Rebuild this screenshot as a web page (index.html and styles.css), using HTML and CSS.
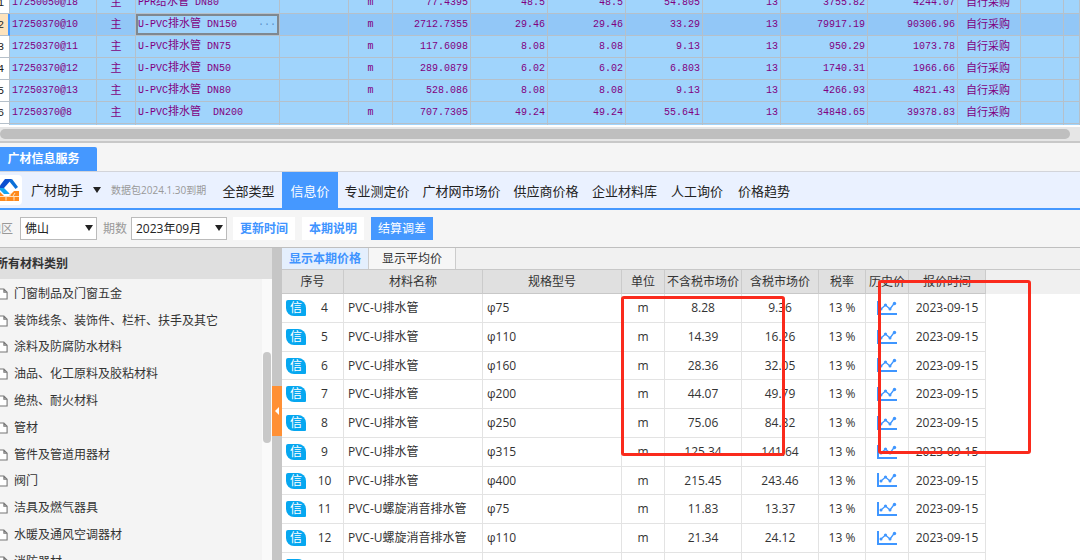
FILE: index.html
```
<!DOCTYPE html>
<html lang="zh-CN">
<head>
<meta charset="utf-8">
<title>广材助手</title>
<link rel="stylesheet" href="styles.css">
</head>
<body>
<svg class="defs" aria-hidden="true">
  <symbol id="doc" viewBox="0 0 12 14"><path d="M1 1.500h6.500l3.500 3.500v7.500h-10zM7.500 1.500v3.500h3.500" fill="#fff" stroke="#777" stroke-width="1.200"/></symbol>
  <symbol id="trend" viewBox="0 0 20 15"><path d="M1 0v13h19" fill="none" stroke="#3f96ff" stroke-width="2"/><path d="M4 8l4.500-4 4.500 4 4.500-6" fill="none" stroke="#3f96ff" stroke-width="1.300"/><g fill="#3f96ff"><circle cx="4" cy="8" r="1.500"/><circle cx="8.500" cy="4" r="1.600"/><circle cx="13" cy="8" r="1.500"/><circle cx="17.500" cy="2.500" r="1.700"/></g></symbol>
</svg>

<section class="sheet">
  <table class="sheet-table">
    <colgroup><col class="s-no"><col class="s-code"><col class="s-type"><col class="s-name"><col class="s-spec"><col class="s-unit"><col class="s-wide"><col class="s-num"><col class="s-wide"><col class="s-num"><col class="s-wide"><col class="s-sum"><col class="s-total"><col class="s-mode"><col class="s-gap"><col></colgroup>
    <tbody id="sheet-rows"></tbody>
  </table>
</section>
<div class="hscroll"><div class="hscroll-thumb"></div></div>

<div class="dock-tabs"><button class="dock-tab">广材信息服务</button></div>

<header class="nav">
  <svg class="logo" viewBox="0 0 30 30"><rect width="30" height="30" rx="4" fill="#fff"/><path d="M13 4h7l-8 9H6z" fill="#0a4fd0"/><path d="M6 13h6l6 6h-6z" fill="#12a5f0"/><path d="M17 6l3-2 6 8-2.500 2-4.500-5.500z" fill="#0a6fd8"/><path d="M8 17l4 4h5l3-3 2-2h5v10H8z" fill="#ff8a1c"/><path d="M8 21.500h19M14 21.500v4M18 18v3.500l-2 0M22 21.500v4M23 18l-2 3" fill="none" stroke="#ffe2c0" stroke-width="1"/></svg>
  <button class="brand">广材助手<span class="caret"></span></button>
  <span class="expiry">数据包2024.1.30到期</span>
  <nav class="menu">
    <a href="#">全部类型</a><a href="#" class="current">信息价</a><a href="#">专业测定价</a><a href="#">广材网市场价</a><a href="#">供应商价格</a><a href="#">企业材料库</a><a href="#">人工询价</a><a href="#">价格趋势</a>
  </nav>
</header>

<div class="filters">
  <label for="area">地区</label>
  <span class="picker area"><select id="area"><option>佛山</option></select></span>
  <label for="period">期数</label>
  <span class="picker period"><select id="period"><option>2023年09月</option></select></span>
  <button class="action">更新时间</button>
  <button class="action">本期说明</button>
  <button class="action primary">结算调差</button>
</div>

<main class="work">
  <aside class="side">
    <h2>所有材料类别</h2>
    <div class="side-body">
      <ul class="tree" id="tree"></ul>
      <div class="vscroll"><div class="vscroll-thumb"></div></div>
    </div>
  </aside>
  <div class="splitter"><button class="collapse" aria-label="收起"></button></div>
  <section class="prices">
    <div class="views"><button class="view active">显示本期价格</button><button class="view">显示平均价</button></div>
    <div class="table-area">
      <table class="price-table">
        <colgroup><col class="p-no"><col class="p-name"><col class="p-name"><col class="p-unit"><col class="p-price"><col class="p-price"><col class="p-rate"><col class="p-unit"><col class="p-price"></colgroup>
        <thead><tr><th>序号</th><th>材料名称</th><th>规格型号</th><th>单位</th><th>不含税市场价</th><th>含税市场价</th><th>税率</th><th>历史价</th><th>报价时间</th></tr></thead>
        <tbody id="price-rows"></tbody>
      </table>
    </div>
    <div class="mark mark-price"></div>
    <div class="mark mark-date"></div>
  </section>
</main>
<script src="app.js"></script>
</body>
</html>
```

FILE: styles.css
```
* { box-sizing: border-box; }

body {
  margin: 0;
  height: 100vh;
  display: flex;
  flex-direction: column;
  overflow: hidden;
  background: #f5f5f5;
  color: #333;
  font: 12px/16px "Open Sans", "Noto Sans CJK SC", sans-serif;
}

button, select { font: inherit; color: inherit; border: 0; padding: 0; margin: 0; background: none; border-radius: 0; }
a { color: inherit; text-decoration: none; }
table { border-collapse: separate; border-spacing: 0; table-layout: fixed; }
.defs { position: absolute; width: 0; height: 0; }

/* Bill of materials */
.sheet { flex: none; height: 125px; overflow: hidden; background: #fff; }
.sheet-table {
  width: calc(100% + 10px);
  margin: -8px 0 0 -10px;
  color: #800080;
  font: 10px/20px "Liberation Mono", "Noto Sans CJK SC", monospace;
}
.s-no { width: 20px; }
.s-code { width: 87px; }
.s-type { width: 39px; }
.s-name { width: 144px; }
.s-spec { width: 69px; }
.s-unit { width: 44px; }
.s-wide { width: 78px; }
.s-num { width: 77px; }
.s-sum { width: 87px; }
.s-total { width: 90px; }
.s-mode { width: 63px; }
.s-gap { width: 43px; }
.sheet-table td {
  height: 22px;
  padding: 0 2px;
  background: #a0d4fc;
  border-right: 1px solid #b5c0ca;
  border-bottom: 1px solid #b5c0ca;
  white-space: nowrap;
  text-align: right;
}
.sheet-table .l { text-align: left; }
.sheet-table .c { text-align: center; }
.sheet-table .mode { text-align: left; padding-left: 8px; }
.sheet-table .no { background: #fff; color: #222; padding-right: 5px; font-size: 11px; }
.sheet-table .zh { font-size: 11px; }
.sheet-table .picked td { background: #92c7f7; }
.sheet-table .picked .no { background: #fee3bd; border-right: 2px solid #4598ff; padding-right: 4px; }
.sheet-table .picked .editing { background: #a0d4fc; box-shadow: inset 0 0 0 2px #7f8890; }
.edit { display: flex; justify-content: space-between; }
.more { color: #5a8fc8; padding-right: 1px; line-height: 20px; }

.hscroll { flex: none; padding: 2px 10px 2px 0; border-top: 2px solid #fff; border-bottom: 2px solid #c8c8c8; background: #e6e6e6; }
.hscroll-thumb { height: 10px; border-radius: 5px; background: #bfbfbf; }

/* Dock tab */
.dock-tabs { flex: none; display: flex; padding-top: 4px; border-bottom: 1px solid #d2d4da; }
.dock-tab { width: 97px; height: 24px; padding-right: 10px; border-radius: 0 2px 0 0; background: #4598ff; color: #fff; font-weight: bold; }

/* Navigation */
.nav { flex: none; display: flex; align-items: center; height: 38px; background: #eaf1ff; border-bottom: 2px solid #4598ff; font-size: 13px; color: #222; }
.logo { flex: none; width: 30px; height: 30px; margin-left: -8px; }
.brand { display: flex; align-items: center; gap: 10px; margin-left: 9px; }
.caret, .picker::after { content: ""; border: 4px solid transparent; border-top: 6px solid #222; border-bottom: 0; }
.expiry { width: 104px; margin-left: 10px; font-size: 10px; color: #999; white-space: nowrap; }
.menu { display: grid; grid-template-columns: 67px 56px 78px 91px 78px 79px 66px 68px; align-self: stretch; white-space: nowrap; }
.menu a { display: flex; align-items: center; justify-content: center; padding-top: 2px; }
.menu .current { background: #4598ff; color: #fff; }

/* Filters */
.filters { flex: none; display: flex; align-items: center; height: 38px; border-bottom: 1px solid #bfbfbf; margin-left: -11px; }
.filters label { width: 24px; color: #999; white-space: nowrap; }
.picker { position: relative; margin: 0 6px 0 7px; }
.picker select { width: 100%; height: 23px; padding-left: 4px; background: #fff; border: 1px solid #bbb; appearance: none; color: #222; }
.picker::after { position: absolute; right: 4px; top: 8px; pointer-events: none; }
.area { width: 77px; }
.period { width: 96px; margin-left: 4px; }
.action { width: 62px; height: 23px; margin-right: 7px; background: #fff; color: #3f94ff; font-weight: bold; }
.action.primary { background: #4598ff; color: #fff; font-weight: normal; }

/* Work area */
.work { flex: 1; display: flex; min-height: 0; }
.side { flex: none; width: 272px; display: flex; flex-direction: column; overflow: hidden; }
.side h2 { flex: none; margin: 0; padding: 8px 0 7px; background: #dfdfdf; color: #333; font-size: 12px; line-height: 16px; font-weight: bold; text-indent: -4px; }
.side-body { flex: 1; display: flex; min-height: 0; background: #f4f4f4; }
.tree { flex: 1; margin: 0; padding: 1px 0 0; list-style: none; }
.tree li { display: flex; align-items: center; height: 27px; gap: 6px; margin-left: -3px; white-space: nowrap; }
.tree li:nth-child(5n+3) { height: 26px; }
.tree svg { width: 11px; height: 14px; }
.vscroll { width: 10px; padding: 73px 1px 0; background: #fafafa; }
.vscroll-thumb { height: 91px; border-radius: 4px; background: #c8c8c8; }

.splitter { flex: none; width: 10px; padding-top: 138px; background: #c6c6c6; }
.collapse { display: flex; align-items: center; justify-content: center; width: 10px; height: 50px; background: #ff9035; }
.collapse::before { content: ""; border: 4px solid transparent; border-right-color: #fff; border-left: 0; }

.prices { flex: 1; position: relative; display: flex; flex-direction: column; min-width: 0; background: #fff; }
.views { flex: none; display: flex; height: 22px; background: #f1f1f1; border-bottom: 1px solid #c8c8c8; }
.view { width: 87px; border-right: 1px solid #ccc; background: #f6f6f6; }
.view.active { background: #e4effd; color: #3f94ff; font-weight: bold; }
.table-area { flex: 1; min-height: 0; overflow: hidden; background: linear-gradient(#f0f0f0 24px, #fff 24px); }
.price-table { width: 704px; }
.p-no { width: 62px; }
.p-name { width: 139px; }
.p-unit { width: 43px; }
.p-price { width: 77px; }
.p-rate { width: 47px; }
.price-table th { height: 24px; padding: 0; background: #e0e0e0; border-right: 1px solid #cbcbcb; border-bottom: 1px solid #c8c8c8; font-weight: normal; white-space: nowrap; }
.price-table td { height: 29px; padding: 0; background: #fff; border-right: 1px solid #e3e3e3; border-bottom: 1px solid #e3e3e3; text-align: center; white-space: nowrap; }
.price-table tr:nth-child(4n+3) td { height: 28px; }
.price-table .txt { text-align: left; padding-left: 4px; }
.price-table svg { display: block; width: 20px; height: 15px; margin: 0 auto; }
.seq { display: flex; align-items: center; padding-left: 4px; }
.seq b { flex: 1; font-weight: normal; }
.badge { width: 20px; height: 16px; border-radius: 2px 8px 1px 8px; background: #06a7f0; color: #fff; line-height: 15px; }

/* Review marks */
.mark { position: absolute; border: 3px solid #fa2a1c; border-radius: 3px; pointer-events: none; }
.mark-price { left: 339px; top: 48px; width: 164px; height: 160px; }
.mark-date { left: 596px; top: 32px; width: 153px; height: 174px; }
```

FILE: app.js
```
const bill = [
  ["1", "17250050@18", "PPR", "给水管", " DN80", "77.4395", "48.5", "48.5", "54.805", "3755.82", "4244.07"],
  ["2", "17250370@10", "U-PVC", "排水管", " DN150", "2712.7355", "29.46", "29.46", "33.29", "79917.19", "90306.96"],
  ["3", "17250370@11", "U-PVC", "排水管", " DN75", "117.6098", "8.08", "8.08", "9.13", "950.29", "1073.78"],
  ["4", "17250370@12", "U-PVC", "排水管", " DN50", "289.0879", "6.02", "6.02", "6.803", "1740.31", "1966.66"],
  ["5", "17250370@13", "U-PVC", "排水管", " DN80", "528.086", "8.08", "8.08", "9.13", "4266.93", "4821.43"],
  ["6", "17250370@8", "U-PVC", "排水管", "&nbsp; DN200", "707.7305", "49.24", "49.24", "55.641", "34848.65", "39378.83"]
];

document.getElementById("sheet-rows").innerHTML = bill.map((r, i) => {
  const picked = i === 1;
  const name = `<span>${r[2]}<span class="zh">${r[3]}</span>${r[4]}</span>`;
  const nameCell = picked
    ? `<td class="l editing"><div class="edit">${name}<button class="more" aria-label="选择">···</button></div></td>`
    : `<td class="l">${name}</td>`;
  return `<tr class="${picked ? "picked" : ""}"><td class="no">${r[0]}</td><td class="l">${r[1]}</td><td class="c zh">主</td>${nameCell}<td></td><td class="c">m</td>` +
    r.slice(5, 9).map(v => `<td>${v}</td>`).join("") +
    `<td>13</td><td>${r[9]}</td><td>${r[10]}</td><td class="mode zh">自行采购</td><td></td><td></td></tr>`;
}).join("") + `<tr><td class="no"></td>${"<td></td>".repeat(15)}</tr>`;

const groups = ["门窗制品及门窗五金", "装饰线条、装饰件、栏杆、扶手及其它", "涂料及防腐防水材料", "油品、化工原料及胶粘材料", "绝热、耐火材料", "管材", "管件及管道用器材", "阀门", "洁具及燃气器具", "水暖及通风空调器材", "消防器材"];
document.getElementById("tree").innerHTML = groups.map(g => `<li><svg><use href="#doc"/></svg>${g}</li>`).join("");

const prices = [
  ["4", "PVC-U排水管", "φ75", "8.28", "9.36"],
  ["5", "PVC-U排水管", "φ110", "14.39", "16.26"],
  ["6", "PVC-U排水管", "φ160", "28.36", "32.05"],
  ["7", "PVC-U排水管", "φ200", "44.07", "49.79"],
  ["8", "PVC-U排水管", "φ250", "75.06", "84.82"],
  ["9", "PVC-U排水管", "φ315", "125.34", "141.64"],
  ["10", "PVC-U排水管", "φ400", "215.45", "243.46"],
  ["11", "PVC-U螺旋消音排水管", "φ75", "11.83", "13.37"],
  ["12", "PVC-U螺旋消音排水管", "φ110", "21.34", "24.12"],
  ["", "", "", "", ""]
];
document.getElementById("price-rows").innerHTML = prices.map(p =>
  `<tr><td><div class="seq"><span class="badge">信</span><b>${p[0]}</b></div></td><td class="txt">${p[1]}</td><td class="txt">${p[2]}</td>` +
  `<td>${p[0] && "m"}</td><td>${p[3]}</td><td>${p[4]}</td><td>${p[0] && "13 %"}</td><td><svg><use href="#trend"/></svg></td><td>${p[0] && "2023-09-15"}</td></tr>`
).join("");
```
